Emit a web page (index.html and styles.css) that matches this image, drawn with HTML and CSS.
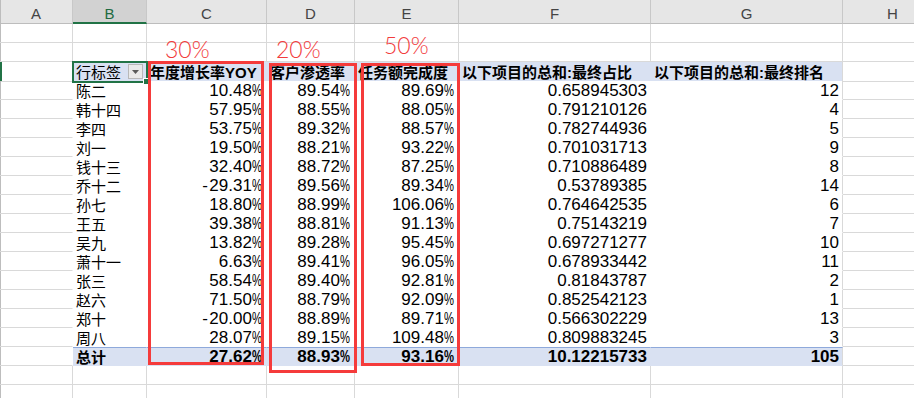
FILE: index.html
```html
<!DOCTYPE html>
<html lang="zh">
<head>
<meta charset="utf-8">
<title>数据透视表</title>
<link rel="stylesheet" href="styles.css">
</head>
<body>
<div class="sheet">
  <div class="row colheads">
    <div class="ch">A</div><div class="ch sel">B</div><div class="ch">C</div><div class="ch">D</div><div class="ch">E</div><div class="ch">F</div><div class="ch">G</div><div class="ch">H</div>
  </div>
  <div class="row"><div class="c a"></div><div class="c"></div><div class="c"></div><div class="c"></div><div class="c"></div><div class="c"></div><div class="c"></div><div class="c"></div></div>
  <div class="row"><div class="c a"></div><div class="c"></div><div class="c"></div><div class="c"></div><div class="c"></div><div class="c"></div><div class="c"></div><div class="c"></div></div>

  <div class="row">
    <div class="c a rsel np"></div>
    <div class="c p hd nm active"><span class="lbl">行标签</span><span class="dd"><svg width="7" height="4" viewBox="0 0 7 4"><path d="M0 0h7L3.5 4z" fill="#5a5a5a"/></svg></span></div>
    <div class="c p hd nm">年度增长率<span class="lat">YOY</span></div>
    <div class="c p hd nm">客户渗透率</div>
    <div class="c p hd nm">任务额完成度</div>
    <div class="c p hd nm">以下项目的总和<span class="lat">:</span>最终占比</div>
    <div class="c p pg hd nm">以下项目的总和<span class="lat">:</span>最终排名</div>
    <div class="c"></div>
  </div>

  <div class="row"><div class="c a np"></div><div class="c p nm">陈二</div><div class="c p num">10.48<span class="pc">%</span></div><div class="c p num">89.54<span class="pc">%</span></div><div class="c p num">89.69<span class="pc">%</span></div><div class="c p num">0.658945303</div><div class="c p pg num">12</div><div class="c"></div></div>
  <div class="row"><div class="c a np"></div><div class="c p nm">韩十四</div><div class="c p num">57.95<span class="pc">%</span></div><div class="c p num">88.55<span class="pc">%</span></div><div class="c p num">88.05<span class="pc">%</span></div><div class="c p num">0.791210126</div><div class="c p pg num">4</div><div class="c"></div></div>
  <div class="row"><div class="c a np"></div><div class="c p nm">李四</div><div class="c p num">53.75<span class="pc">%</span></div><div class="c p num">89.32<span class="pc">%</span></div><div class="c p num">88.57<span class="pc">%</span></div><div class="c p num">0.782744936</div><div class="c p pg num">5</div><div class="c"></div></div>
  <div class="row"><div class="c a np"></div><div class="c p nm">刘一</div><div class="c p num">19.50<span class="pc">%</span></div><div class="c p num">88.21<span class="pc">%</span></div><div class="c p num">93.22<span class="pc">%</span></div><div class="c p num">0.701031713</div><div class="c p pg num">9</div><div class="c"></div></div>
  <div class="row"><div class="c a np"></div><div class="c p nm">钱十三</div><div class="c p num">32.40<span class="pc">%</span></div><div class="c p num">88.72<span class="pc">%</span></div><div class="c p num">87.25<span class="pc">%</span></div><div class="c p num">0.710886489</div><div class="c p pg num">8</div><div class="c"></div></div>
  <div class="row"><div class="c a np"></div><div class="c p nm">乔十二</div><div class="c p num">-&#8202;29.31<span class="pc">%</span></div><div class="c p num">89.56<span class="pc">%</span></div><div class="c p num">89.34<span class="pc">%</span></div><div class="c p num">0.53789385</div><div class="c p pg num">14</div><div class="c"></div></div>
  <div class="row"><div class="c a np"></div><div class="c p nm">孙七</div><div class="c p num">18.80<span class="pc">%</span></div><div class="c p num">88.99<span class="pc">%</span></div><div class="c p num">106.06<span class="pc">%</span></div><div class="c p num">0.764642535</div><div class="c p pg num">6</div><div class="c"></div></div>
  <div class="row"><div class="c a np"></div><div class="c p nm">王五</div><div class="c p num">39.38<span class="pc">%</span></div><div class="c p num">88.81<span class="pc">%</span></div><div class="c p num">91.13<span class="pc">%</span></div><div class="c p num">0.75143219</div><div class="c p pg num">7</div><div class="c"></div></div>
  <div class="row"><div class="c a np"></div><div class="c p nm">吴九</div><div class="c p num">13.82<span class="pc">%</span></div><div class="c p num">89.28<span class="pc">%</span></div><div class="c p num">95.45<span class="pc">%</span></div><div class="c p num">0.697271277</div><div class="c p pg num">10</div><div class="c"></div></div>
  <div class="row"><div class="c a np"></div><div class="c p nm">萧十一</div><div class="c p num">6.63<span class="pc">%</span></div><div class="c p num">89.41<span class="pc">%</span></div><div class="c p num">96.05<span class="pc">%</span></div><div class="c p num">0.678933442</div><div class="c p pg num">11</div><div class="c"></div></div>
  <div class="row"><div class="c a np"></div><div class="c p nm">张三</div><div class="c p num">58.54<span class="pc">%</span></div><div class="c p num">89.40<span class="pc">%</span></div><div class="c p num">92.81<span class="pc">%</span></div><div class="c p num">0.81843787</div><div class="c p pg num">2</div><div class="c"></div></div>
  <div class="row"><div class="c a np"></div><div class="c p nm">赵六</div><div class="c p num">71.50<span class="pc">%</span></div><div class="c p num">88.79<span class="pc">%</span></div><div class="c p num">92.09<span class="pc">%</span></div><div class="c p num">0.852542123</div><div class="c p pg num">1</div><div class="c"></div></div>
  <div class="row"><div class="c a np"></div><div class="c p nm">郑十</div><div class="c p num">-&#8202;20.00<span class="pc">%</span></div><div class="c p num">88.89<span class="pc">%</span></div><div class="c p num">89.71<span class="pc">%</span></div><div class="c p num">0.566302229</div><div class="c p pg num">13</div><div class="c"></div></div>
  <div class="row"><div class="c a np"></div><div class="c p nm">周八</div><div class="c p num">28.07<span class="pc">%</span></div><div class="c p num">89.15<span class="pc">%</span></div><div class="c p num">109.48<span class="pc">%</span></div><div class="c p num">0.809883245</div><div class="c p pg num">3</div><div class="c"></div></div>

  <div class="row"><div class="c a np"></div><div class="c p tot nm">总计</div><div class="c p tot num">27.62<span class="pc">%</span></div><div class="c p tot num">88.93<span class="pc">%</span></div><div class="c p tot num">93.16<span class="pc">%</span></div><div class="c p tot num">10.12215733</div><div class="c p pg tot num">105</div><div class="c"></div></div>

  <div class="row"><div class="c a"></div><div class="c"></div><div class="c"></div><div class="c"></div><div class="c"></div><div class="c"></div><div class="c"></div><div class="c"></div></div>
  <div class="row"><div class="c a"></div><div class="c"></div><div class="c"></div><div class="c"></div><div class="c"></div><div class="c"></div><div class="c"></div><div class="c"></div></div>

  <div class="note n1">30%</div>
  <div class="note n2">20%</div>
  <div class="note n3">50%</div>
  <div class="box b1"></div>
  <div class="box b2"></div>
  <div class="box b3"></div>
</div>
</body>
</html>
```
FILE: styles.css
```css
html, body {
  margin: 0;
  padding: 0;
  background: #fff;
}
body {
  width: 914px;
  height: 398px;
  overflow: hidden;
}
.sheet {
  position: relative;
  display: flex;
  flex-direction: column;
  width: 943px;
  font-family: "Liberation Sans Narrow", "Liberation Sans", "Noto Sans CJK SC", sans-serif;
  color: #000;
}
.row {
  display: grid;
  grid-template-columns: 73px 74px 120px 88px 104px 192px 192px 100px;
  height: 19px;
  flex: none;
}
.colheads {
  height: 24px;
}
.ch {
  box-sizing: border-box;
  background: #e6e6e6;
  border-right: 1px solid #c8c8c8;
  border-bottom: 1px solid #bdbdbd;
  color: #444;
  font-size: 15px;
  text-align: center;
  line-height: 17px;
  padding-top: 5px;
}
.ch:first-child {
  box-shadow: inset 1px 0 #bdbdbd;
}
.ch.sel {
  background: #d2d2d2;
  border-bottom: 2px solid #217346;
  color: #1e6b41;
}
.c {
  box-sizing: border-box;
  border-right: 1px solid #d9d9d9;
  border-bottom: 1px solid #d9d9d9;
  white-space: nowrap;
  min-width: 0;
}
.a {
  box-shadow: inset 1px 0 #bdbdbd;
}
.a.rsel {
  box-shadow: inset 2px 0 #217346;
}
.a.np {
  border-right-color: transparent;
}
.p {
  background: #fff;
  border-right-color: transparent;
  border-bottom-color: transparent;
}
.p.pg {
  border-right-color: #d9d9d9;
}
.hd {
  background: #d9e1f2;
  border-bottom-color: #8ea9db;
  font-weight: bold;
}
.tot {
  background: #d9e1f2;
  border-top: 1px solid #8ea9db;
  font-weight: bold;
}
.nm {
  font-family: "Noto Sans CJK SC", sans-serif;
  font-size: 15px;
  line-height: 17px;
  padding: 1px 0 0 3px;
}
.lat {
  font-family: "Liberation Sans", sans-serif;
}
.num {
  font-size: 17px;
  line-height: 17px;
  padding: 1px 3px 0 0;
  text-align: right;
}
.tot.num, .tot.nm {
  padding-top: 0;
}
.pc {
  display: inline-block;
  transform: scaleX(0.66);
  transform-origin: left center;
  margin-right: -4px;
}
.active {
  position: relative;
  z-index: 2;
  display: grid;
  grid-template-columns: 1fr 15px;
  column-gap: 0;
  padding-right: 3px;
  font-weight: normal;
  outline: 2px solid #217346;
  outline-offset: -1px;
}
.active::after {
  content: "";
  position: absolute;
  right: -4px;
  bottom: -4px;
  width: 5px;
  height: 5px;
  background: #217346;
  border: 1px solid #fff;
}
.lbl {
  font-weight: normal;
}
.dd {
  box-sizing: border-box;
  width: 15px;
  height: 15px;
  margin-top: 1px;
  background: #e9e9e9;
  border: 1px solid #b8b8b8;
  display: flex;
  align-items: center;
  justify-content: center;
}
.dd svg {
  display: block;
}
.note {
  position: absolute;
  z-index: 3;
  font-family: "Lato", "Liberation Sans", sans-serif;
  font-weight: 300;
  font-size: 23px;
  line-height: 23px;
  color: #f23c3c;
}
.n1 { left: 165px; top: 38px; }
.n2 { left: 276px; top: 38px; }
.n3 { left: 384px; top: 34px; }
.box {
  position: absolute;
  z-index: 3;
  box-sizing: border-box;
  border: 3px solid #f53b3b;
}
.b1 { left: 148px; top: 61px; width: 116px; height: 304px; }
.b2 { left: 269px; top: 63px; width: 88px; height: 310px; }
.b3 { left: 361px; top: 63px; width: 99px; height: 303px; }
```
